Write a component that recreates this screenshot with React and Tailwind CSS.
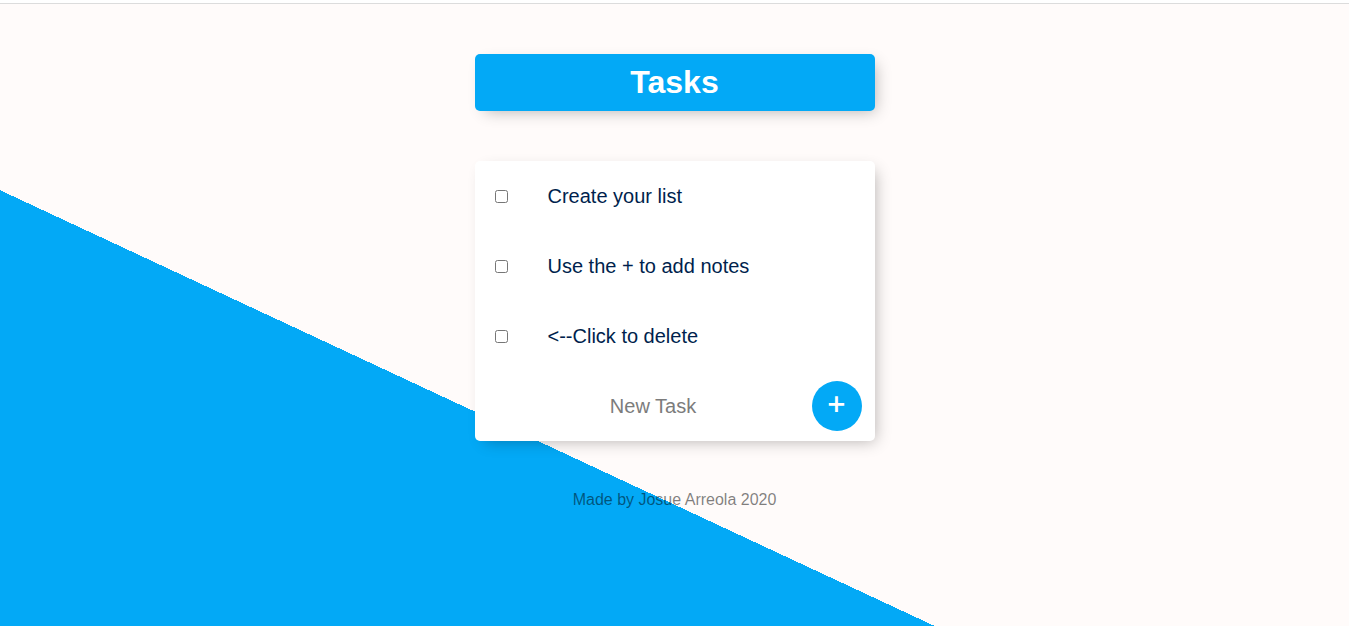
import { useState } from "react";

const initialTasks = [
  { id: 1, text: "Create your list" },
  { id: 2, text: "Use the + to add notes" },
  { id: 3, text: "<--Click to delete" },
];

function TaskItem({ task, onDelete }) {
  const inputId = `task-${task.id}`;
  return (
    <li className="flex min-h-[70px] items-center px-5">
      <input
        id={inputId}
        type="checkbox"
        checked={false}
        onChange={() => onDelete(task.id)}
        className="size-[13px] shrink-0"
      />
      <label htmlFor={inputId} className="ml-10 min-w-0 break-words text-[20px] leading-6 text-[#001f4d]">
        {task.text}
      </label>
    </li>
  );
}

export default function App() {
  const [tasks, setTasks] = useState(initialTasks);
  const [draft, setDraft] = useState("");

  const removeTask = (id) => setTasks(tasks.filter((task) => task.id !== id));

  const addTask = (event) => {
    event.preventDefault();
    if (!draft.trim()) return;
    setTasks([...tasks, { id: Date.now(), text: draft.trim() }]);
    setDraft("");
  };

  return (
    <div className="flex min-h-screen flex-col bg-[#fffbfa] bg-[linear-gradient(25deg,#03a9f6_395px,transparent_395px)] font-['Liberation_Sans',Arial,sans-serif]">
      <div className="h-1 border-b border-[#dcdcdc] bg-white" />
      <main className="mx-auto w-full max-w-[400px] pt-[50px]">
        <header className="rounded-[5px] bg-[#03a9f6] p-[10px] text-center shadow-[5px_5px_15px_-5px_rgba(0,0,0,0.3)]">
          <h1 className="text-[32px] leading-[37px] font-bold text-white">Tasks</h1>
        </header>
        <section className="mt-[50px] rounded-[5px] bg-white shadow-[5px_5px_15px_-5px_rgba(0,0,0,0.3)]">
          <ul>
            {tasks.map((task) => (
              <TaskItem key={task.id} task={task} onDelete={removeTask} />
            ))}
          </ul>
          <form onSubmit={addTask} className="flex h-[70px] items-center pr-[13px] pl-5">
            <input
              type="text"
              aria-label="New Task"
              placeholder="New Task"
              value={draft}
              onChange={(event) => setDraft(event.target.value)}
              className="h-[60px] min-w-0 flex-1 bg-transparent text-center text-[20px] text-[#001f4d] outline-none placeholder:text-[#7c7c7c]"
            />
            <button
              type="submit"
              aria-label="Add task"
              className="size-[50px] shrink-0 rounded-full bg-[#03a9f6] pb-1 font-['Open_Sans',sans-serif] text-[32px] leading-9 font-semibold text-white"
            >
              +
            </button>
          </form>
        </section>
      </main>
      <footer className="py-[50px] text-center text-base leading-[18px] text-black/50">
        Made by Josue Arreola 2020
      </footer>
    </div>
  );
}
